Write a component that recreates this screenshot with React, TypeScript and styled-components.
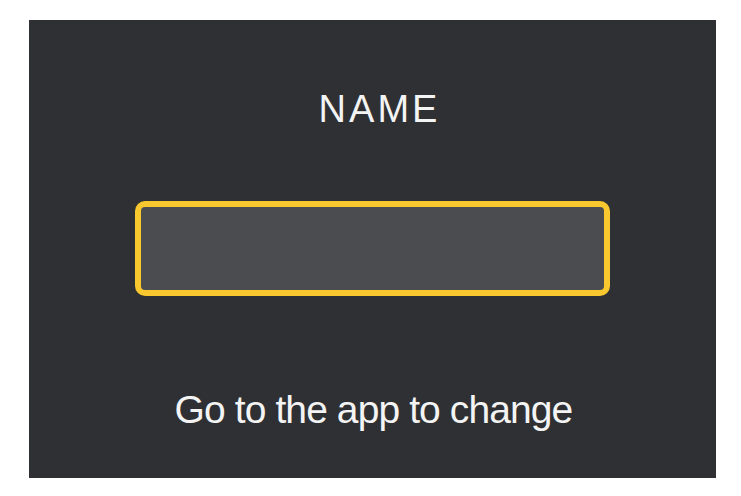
import React from "react";
import styled, { createGlobalStyle } from "styled-components";

const GlobalStyle = createGlobalStyle`
  html, body {
    margin: 0;
    padding: 0;
    background: #ffffff;
  }
`;

const Page = styled.div`
  width: 741px;
  height: 496px;
  padding: 20px 0 0 29px;
  box-sizing: border-box;
`;

const Panel = styled.section`
  width: 687px;
  height: 458px;
  background: #2f3033;
  display: flex;
  flex-direction: column;
  align-items: center;
  padding-top: 70px;
  box-sizing: border-box;
  font-family: "Liberation Sans", Arial, sans-serif;
  color: #f4f4f4;
`;

const Title = styled.h1`
  margin: 0 0 73px 14px;
  font-size: 38px;
  font-weight: 400;
  line-height: 1;
  letter-spacing: 3px;
`;

const NameField = styled.div`
  width: 475px;
  height: 95px;
  box-sizing: border-box;
  border: 6px solid #f8c82e;
  border-radius: 10px;
  background: #4b4c50;
`;

const Hint = styled.p`
  margin: 94px 0 0 2px;
  font-size: 39px;
  line-height: 1;
  letter-spacing: -0.9px;
`;

const App: React.FC = () => {
  return (
    <>
      <GlobalStyle />
      <Page>
        <Panel>
          <Title>NAME</Title>
          <NameField />
          <Hint>Go to the app to change</Hint>
        </Panel>
      </Page>
    </>
  );
};

export default App;
